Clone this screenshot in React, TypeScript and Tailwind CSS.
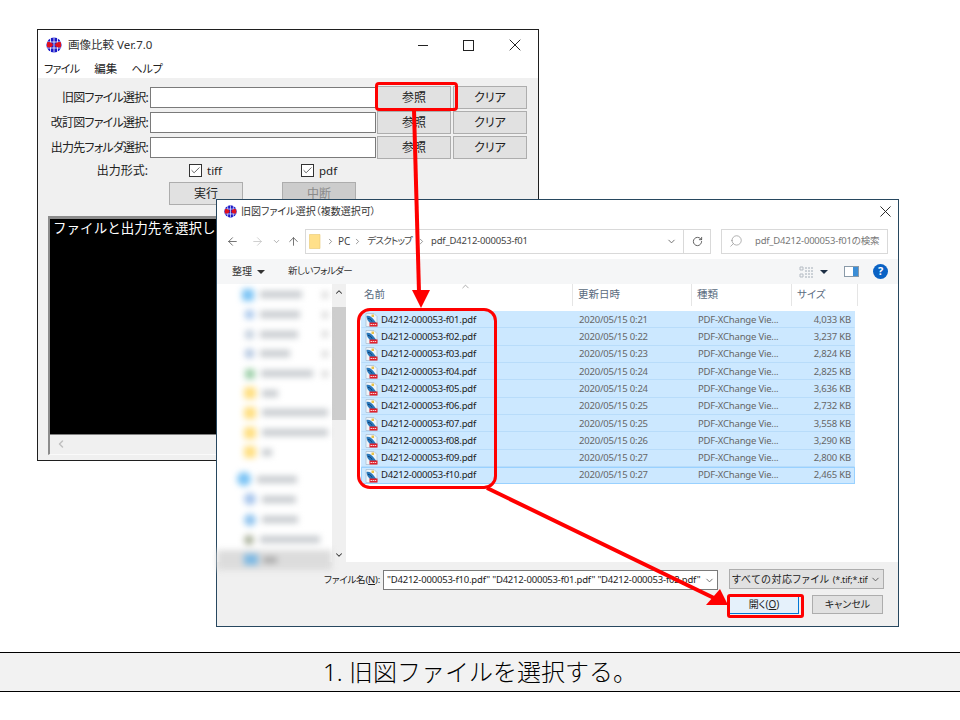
import { ChevronDown, ChevronUp, ChevronRight, ArrowLeft, ArrowRight, ArrowUp, RotateCw, Search, X, Check, ChevronLeft } from "lucide-react";

const files = [
  { name: "D4212-000053-f01.pdf", date: "2020/05/15 0:21", size: "4,033 KB" },
  { name: "D4212-000053-f02.pdf", date: "2020/05/15 0:22", size: "3,237 KB" },
  { name: "D4212-000053-f03.pdf", date: "2020/05/15 0:23", size: "2,824 KB" },
  { name: "D4212-000053-f04.pdf", date: "2020/05/15 0:24", size: "2,825 KB" },
  { name: "D4212-000053-f05.pdf", date: "2020/05/15 0:24", size: "3,636 KB" },
  { name: "D4212-000053-f06.pdf", date: "2020/05/15 0:25", size: "2,732 KB" },
  { name: "D4212-000053-f07.pdf", date: "2020/05/15 0:25", size: "3,558 KB" },
  { name: "D4212-000053-f08.pdf", date: "2020/05/15 0:26", size: "3,290 KB" },
  { name: "D4212-000053-f09.pdf", date: "2020/05/15 0:27", size: "2,800 KB" },
  { name: "D4212-000053-f10.pdf", date: "2020/05/15 0:27", size: "2,465 KB" },
];

// blurred-out navigation pane: icon colour, indent, icon size, label width
const navRows = [
  { color: "#7cc4f5", indent: 25, icon: 12, text: 42, tail: true },
  { color: "#a9c8ec", indent: 28, icon: 9, text: 40, tail: true },
  { color: "#c4d0de", indent: 28, icon: 9, text: 38, tail: true },
  { color: "#b3c6e0", indent: 28, icon: 9, text: 30, tail: true },
  { color: "#9ccfa8", indent: 28, icon: 10, text: 52, tail: true },
  { color: "#ffdf80", indent: 27, icon: 12, text: 16, tail: false },
  { color: "#ffdf80", indent: 27, icon: 12, text: 66, tail: false },
  { color: "#ffdf80", indent: 27, icon: 12, text: 66, tail: false },
  { color: "#ffdf80", indent: 27, icon: 12, text: 10, tail: false },
];

const navRows2 = [
  { color: "#7cc4f5", indent: 20, icon: 14, text: 40 },
  { color: "#a5c4ec", indent: 27, icon: 12, text: 34 },
  { color: "#8fc3ee", indent: 27, icon: 12, text: 36 },
  { color: "#a9b09a", indent: 27, icon: 10, text: 60 },
];

function AppIcon({ className }: { className?: string }) {
  return (
    <svg viewBox="0 0 16 16" className={className}>
      <circle cx="8" cy="8" r="7.6" fill="#1a1ac8" />
      <path d="M0.6 5h14.8M8 0.5v15M0.800 11h14.400M4.500 1v14M11.500 1v14" stroke="#fff" strokeWidth=".8" />
      <path d="M1 5.500c2-1 5-.5 6 2.500-1 2.500-4 3-6 2zM15 5.500c-2-1-5-.5-6 2.500 1 2.500 4 3 6 2z" fill="#e01020" />
    </svg>
  );
}

function PdfIcon() {
  return (
    <svg viewBox="0 0 13 14" className="h-[14px] w-[13px] shrink-0">
      <path d="M1 .5h8l3 3v10H1z" fill="#eef5fb" stroke="#a8bccd" strokeWidth=".7" />
      <path d="M1.500 3c4-1 6 2 10 7H5C3 8 1.500 6 1.500 3z" fill="#2a78bb" />
      <path d="M3 5.500c2 0 3 1 4 3" stroke="#0e3f73" strokeWidth="1" fill="none" />
      <path d="M6.500 1.500h2.500v2.500H6.500z" fill="#e8c24a" />
      <rect x="4.500" y="9.500" width="8" height="4" fill="#e0202c" />
      <path d="M5.500 11.500h6" stroke="#fff" strokeWidth=".8" strokeDasharray="1.500 .6" />
    </svg>
  );
}

function FormRow({ label }: { label: string }) {
  return (
    <div className="flex h-[23px] items-center">
      <div className="w-[110px] whitespace-nowrap text-right text-[12px] tracking-[-0.75px] text-[#222]">{label}</div>
      <input readOnly className="ml-[2px] h-[21px] w-[226px] border border-[#7a7a7a] bg-white" />
      <WinButton className="ml-px">参照</WinButton>
      <WinButton className="ml-[2px]">クリア</WinButton>
    </div>
  );
}

function WinButton({ children, className = "" }: { children: string; className?: string }) {
  return (
    <div className={`flex h-[23px] w-[74px] items-center justify-center border border-[#adadad] bg-[#e1e1e1] text-[12px] text-[#222] ${className}`}>
      {children}
    </div>
  );
}

function CheckOption({ label, className }: { label: string; className: string }) {
  return (
    <div className={`flex items-center gap-[5px] ${className}`}>
      <div className="flex h-[13px] w-[13px] items-center justify-center border border-[#333] bg-white">
        <Check size={11} strokeWidth={1.5} className="text-[#222]" />
      </div>
      <span className="text-[11.500px] text-[#222]">{label}</span>
    </div>
  );
}

function MainWindow() {
  return (
    <div className="absolute left-[37px] top-[29px] flex h-[432px] w-[502px] flex-col border border-[#1f1f1f] bg-[#f0f0f0]">
      <div className="flex h-[30px] shrink-0 items-center bg-white pl-[8px]">
        <AppIcon className="h-[16px] w-[16px]" />
        <span className="ml-[6px] text-[11.500px] text-[#333]">画像比較 Ver.7.0</span>
        <div className="ml-auto flex items-center pr-[13px]">
          <div className="h-px w-[10px] bg-[#222]" />
          <div className="ml-[35px] h-[11px] w-[11px] border border-[#222]" />
          <X size={20} strokeWidth={1.2} className="ml-[31px] text-[#222]" />
        </div>
      </div>
      <div className="flex h-[18px] shrink-0 items-center bg-white pl-[6px] text-[11px] text-[#222]">
        <span className="tracking-[-0.7px]">ファイル</span>
        <span className="ml-[15px] text-[11.500px]">編集</span>
        <span className="ml-[14px]">ヘルプ</span>
      </div>
      <div className="flex min-h-0 flex-1 flex-col pt-[8px]">
        <div className="flex flex-col gap-[2px]">
          <FormRow label="旧図ファイル選択:" />
          <FormRow label="改訂図ファイル選択:" />
          <FormRow label="出力先フォルダ選択:" />
        </div>
        <div className="flex h-[23px] items-center">
          <div className="w-[110px] text-right text-[12px] text-[#222]">出力形式:</div>
          <CheckOption label="tiff" className="ml-[41px] w-[112px]" />
          <CheckOption label="pdf" className="" />
        </div>
        <div className="flex">
          <WinButton className="ml-[131px]">実行</WinButton>
          <div className="ml-[39px] flex h-[23px] w-[74px] items-center justify-center border border-[#adadad] bg-[#cccccc] text-[12px] text-[#8a8a8a]">
            中断
          </div>
        </div>
        <div className="ml-[10px] mr-[10px] mt-[11px] h-[239px] border-b border-l-[2px] border-t-[3px] border-b-[#fafafa] border-l-[#8c8c8c] border-t-[#8c8c8c] bg-[#f0f0f0]">
          <div className="h-[216px] overflow-hidden whitespace-nowrap border-b border-[#808080] bg-black pl-[3px] text-[13.500px] leading-[18px] tracking-[0.05px] text-white [font-feature-settings:'palt'_0]">
            ファイルと出力先を選択してください
          </div>
          <div className="flex h-[18px] items-center pl-[5px]">
            <ChevronLeft size={12} strokeWidth={3} className="text-[#c0c0c0]" />
          </div>
        </div>
      </div>
    </div>
  );
}

function NavPane() {
  return (
    <div className="relative h-full w-[115px] shrink-0 bg-white">
      <div className="flex flex-col pt-[1px] blur-[3px]">
        {navRows.map((row, i) => (
          <div key={i} className="flex h-[19.700px] items-center">
            <div style={{ marginLeft: row.indent, width: row.icon, height: row.icon, background: row.color }} className="rounded-[2px]" />
            <div style={{ width: row.text }} className="ml-[6px] h-[7px] bg-[#c6cace]" />
            {row.tail && <div className="ml-auto mr-[4px] h-[6px] w-[6px] bg-[#d4d4d4]" />}
          </div>
        ))}
        <div className="mt-[7px]" />
        {navRows2.map((row, i) => (
          <div key={i} className="flex h-[20.200px] items-center">
            <div style={{ marginLeft: row.indent, width: row.icon, height: row.icon, background: row.color }} className="rounded-full" />
            <div style={{ width: row.text }} className="ml-[6px] h-[7px] bg-[#c6cace]" />
          </div>
        ))}
        <div className="flex h-[20px] items-center bg-[#dcdcdc]">
          <div className="ml-[27px] h-[11px] w-[14px] bg-[#7db9e4]" />
          <div className="ml-[5px] h-[6px] w-[14px] bg-[#a8a8a8]" />
        </div>
      </div>
    </div>
  );
}

function FileList() {
  return (
    <div className="min-w-0 flex-1 bg-white pl-[15px]">
      <div className="grid h-[27px] grid-cols-[212px_119px_100px_66px] text-[10.500px] text-[#5a6b80]">
        <div className="relative flex h-[22px] items-center border-r border-[#e5e5e5] pl-[3px]">
          名前
          <ChevronUp size={11} strokeWidth={1.5} className="absolute left-[99px] top-[-3px] text-[#8a8a8a]" />
        </div>
        <div className="flex h-[22px] items-center border-r border-[#e5e5e5] pl-[5px]">更新日時</div>
        <div className="flex h-[22px] items-center border-r border-[#e5e5e5] pl-[5px]">種類</div>
        <div className="flex h-[22px] items-center border-r border-[#e5e5e5] pl-[5px]">サイズ</div>
      </div>
      <div className="w-[494px]">
        {files.map((file, i) => (
          <div
            key={file.name}
            className={`grid h-[17.330px] grid-cols-[211px_119px_100px_62px] items-center border bg-[#cce8ff] text-[9.500px] tracking-[-0.2px] ${i === 9 ? "border-[#99d1ff]" : "border-transparent border-b-[#b8dcfa]"}`}
          >
            <div className="flex items-center pl-[3px] text-[#222]">
              <PdfIcon />
              <span className="ml-[3px]">{file.name}</span>
            </div>
            <div className="pl-[6px] text-[#666]">{file.date}</div>
            <div className="pl-[6px] text-[#666]">PDF-XChange Vie...</div>
            <div className="pr-[3px] text-right text-[#666]">{file.size}</div>
          </div>
        ))}
      </div>
    </div>
  );
}

function FileDialog() {
  return (
    <div className="absolute left-[216px] top-[199px] flex h-[428px] w-[683px] flex-col border border-[#27475f] bg-white">
      <div className="flex h-[23px] shrink-0 items-center pl-[7px]">
        <AppIcon className="h-[13px] w-[13px]" />
        <span className="ml-[4px] text-[10px] text-[#333]">旧図ファイル選択（複数選択可）</span>
        <X size={19} strokeWidth={1.2} className="ml-auto mr-[3px] text-[#222]" />
      </div>
      <div className="flex h-[36px] shrink-0 items-center">
        <ArrowLeft size={13} strokeWidth={1.5} className="ml-[9px] text-[#555]" />
        <ArrowRight size={13} strokeWidth={1.5} className="ml-[12px] text-[#c5c5c5]" />
        <ChevronDown size={9} strokeWidth={1.5} className="ml-[8px] text-[#777]" />
        <ArrowUp size={13} strokeWidth={1.5} className="ml-[6px] text-[#555]" />
        <div className="ml-[5px] flex h-[25px] w-[406px] items-center border border-[#d9d9d9] text-[10px] text-[#444]">
          <svg viewBox="0 0 12 15" className="ml-[3px] h-[15px] w-[12px]">
            <path d="M.5.5h10.500v14H.5z" fill="#ffe08a" stroke="#e8c870" strokeWidth=".6" />
          </svg>
          <ChevronRight size={9} className="ml-[5px] text-[#777]" />
          <span className="ml-[3px]">PC</span>
          <ChevronRight size={9} className="ml-[3px] text-[#777]" />
          <span className="ml-[5px] text-[9.500px] tracking-[-0.8px]">デスクトップ</span>
          <ChevronRight size={9} className="ml-[5px] text-[#777]" />
          <span className="ml-[5px] text-[9.500px] tracking-[-0.2px]">pdf_D4212-000053-f01</span>
          <ChevronDown size={11} className="ml-auto text-[#666]" />
          <div className="ml-[6px] flex h-full w-[27px] items-center justify-center border-l border-[#d9d9d9]">
            <RotateCw size={11} className="text-[#555]" />
          </div>
        </div>
        <div className="ml-[10px] flex h-[25px] w-[167px] items-center border border-[#d9d9d9] text-[9.500px] tracking-[-0.2px] text-[#777]">
          <Search size={14} strokeWidth={1.1} className="ml-[7px] -scale-x-100 text-[#888]" />
          <span className="ml-[12px] whitespace-nowrap">pdf_D4212-000053-f01の検索</span>
        </div>
      </div>
      <div className="flex h-[25px] shrink-0 items-center bg-[#f5f6f7] text-[10px] text-[#333]">
        <span className="ml-[15px]">整理</span>
        <div className="ml-[5px] h-0 w-0 border-x-[4px] border-t-[4px] border-x-transparent border-t-[#333]" />
        <span className="ml-[23px] text-[9.500px] tracking-[-0.6px]">新しいフォルダー</span>
        <svg viewBox="0 0 16 12" className="ml-auto h-[12px] w-[16px]">
          <path d="M1 1h3v3H1zM1 8h3v3H1z" fill="none" stroke="#b5bcc4" />
          <path d="M6 2h9M6 5h9M6 8h9M6 11h9" stroke="#a2acb6" strokeDasharray="2 1" />
        </svg>
        <div className="ml-[5px] h-0 w-0 border-x-[4px] border-t-[4px] border-x-transparent border-t-[#1d2f45]" />
        <svg viewBox="0 0 15 11" className="ml-[16px] h-[11px] w-[15px]">
          <rect x=".5" y=".5" width="14" height="10" fill="#fff" stroke="#8a9aa8" />
          <rect x="9" y="1" width="5" height="9" fill="#3c8ed6" />
        </svg>
        <div className="ml-[14px] mr-[10px] flex h-[15px] w-[15px] items-center justify-center rounded-full bg-[#0a62c4] text-[11px] font-bold text-white">
          ?
        </div>
      </div>
      <div className="flex min-h-0 flex-1">
        <NavPane />
        <div className="flex w-[14px] shrink-0 flex-col items-center bg-[#f0f0f0] text-[#333]">
          <ChevronUp size={10} strokeWidth={2.500} className="mt-[3px]" />
          <div className="mt-[10px] h-[113px] w-full bg-[#cdcdcd]" />
          <ChevronDown size={10} strokeWidth={2.500} className="mb-[2px] mt-auto" />
        </div>
        <FileList />
      </div>
      <div className="flex h-[64px] shrink-0 flex-col bg-[#f0f0f0] text-[10px] text-[#222]">
        <div className="mt-[8px] flex items-center">
          <span className="ml-[107px] w-[59px] whitespace-nowrap text-[9.500px] tracking-[-0.2px]">
            ファイル名(<span className="underline">N</span>):
          </span>
          <div className="flex h-[20px] w-[335px] items-center border border-[#7a7a7a] bg-white pl-[3px]">
            <span className="min-w-0 flex-1 overflow-hidden whitespace-nowrap text-[9.500px] tracking-[-0.2px]">
              "D4212-000053-f10.pdf" "D4212-000053-f01.pdf" "D4212-000053-f02.pdf"
            </span>
            <ChevronDown size={11} className="mx-[2px] shrink-0 text-[#666]" />
          </div>
          <div className="ml-[11px] flex h-[20px] w-[155px] -translate-y-px items-center border border-[#adadad] bg-[#e1e1e1] pl-[2px]">
            <span className="min-w-0 flex-1 overflow-hidden whitespace-nowrap">
              <span className="tracking-[0.6px]">すべての対応ファイル</span>
              <span className="ml-[3px] text-[9px] tracking-[-0.2px]">(*.tif;*.tiff;*.pdf)</span>
            </span>
            <ChevronDown size={11} className="mx-[2px] shrink-0 text-[#555]" />
          </div>
        </div>
        <div className="mt-[5px] flex">
          <div className="ml-[512px] flex h-[19px] w-[70px] items-center justify-center border border-[#0078d7] bg-[#e5f1fb]">
            開く(<span className="underline">O</span>)
          </div>
          <div className="ml-[13px] flex h-[19px] w-[71px] items-center justify-center border border-[#adadad] bg-[#e1e1e1]">
            キャンセル
          </div>
        </div>
      </div>
    </div>
  );
}

function Annotations() {
  return (
    <>
      <div className="absolute left-[375px] top-[82px] h-[29px] w-[83px] rounded-[4px] border-[3px] border-[#ff0000]" />
      <div className="absolute left-[357px] top-[308px] h-[181px] w-[140px] rounded-[13px] border-[3px] border-[#ff0000]" />
      <div className="absolute left-[727px] top-[594px] h-[24px] w-[77px] rounded-[3px] border-[3px] border-[#ff0000]" />
      <svg viewBox="0 0 960 652" className="absolute left-0 top-0 h-[652px] w-[960px]">
        <path d="M414 110L419 292" stroke="#ff0000" strokeWidth="4" fill="none" />
        <path d="M412 290L430 290L421 308z" fill="#ff0000" />
        <path d="M487 488L716 599" stroke="#ff0000" strokeWidth="4" fill="none" />
        <path d="M720 589L706 605L728 605z" fill="#ff0000" />
      </svg>
    </>
  );
}

export default function App() {
  return (
    <div className="flex h-[720px] w-[960px] flex-col bg-white font-['Noto_Sans','Noto_Sans_CJK_JP',sans-serif] [font-feature-settings:'palt']">
      <div className="relative h-[652px] shrink-0">
        <MainWindow />
        <FileDialog />
        <Annotations />
      </div>
      <div className="flex h-[40px] items-center justify-center border-y border-black bg-[#f2f2f2] text-[24px] font-light text-black [font-feature-settings:'palt'_0]">
        1. 旧図ファイルを選択する。
      </div>
    </div>
  );
}
